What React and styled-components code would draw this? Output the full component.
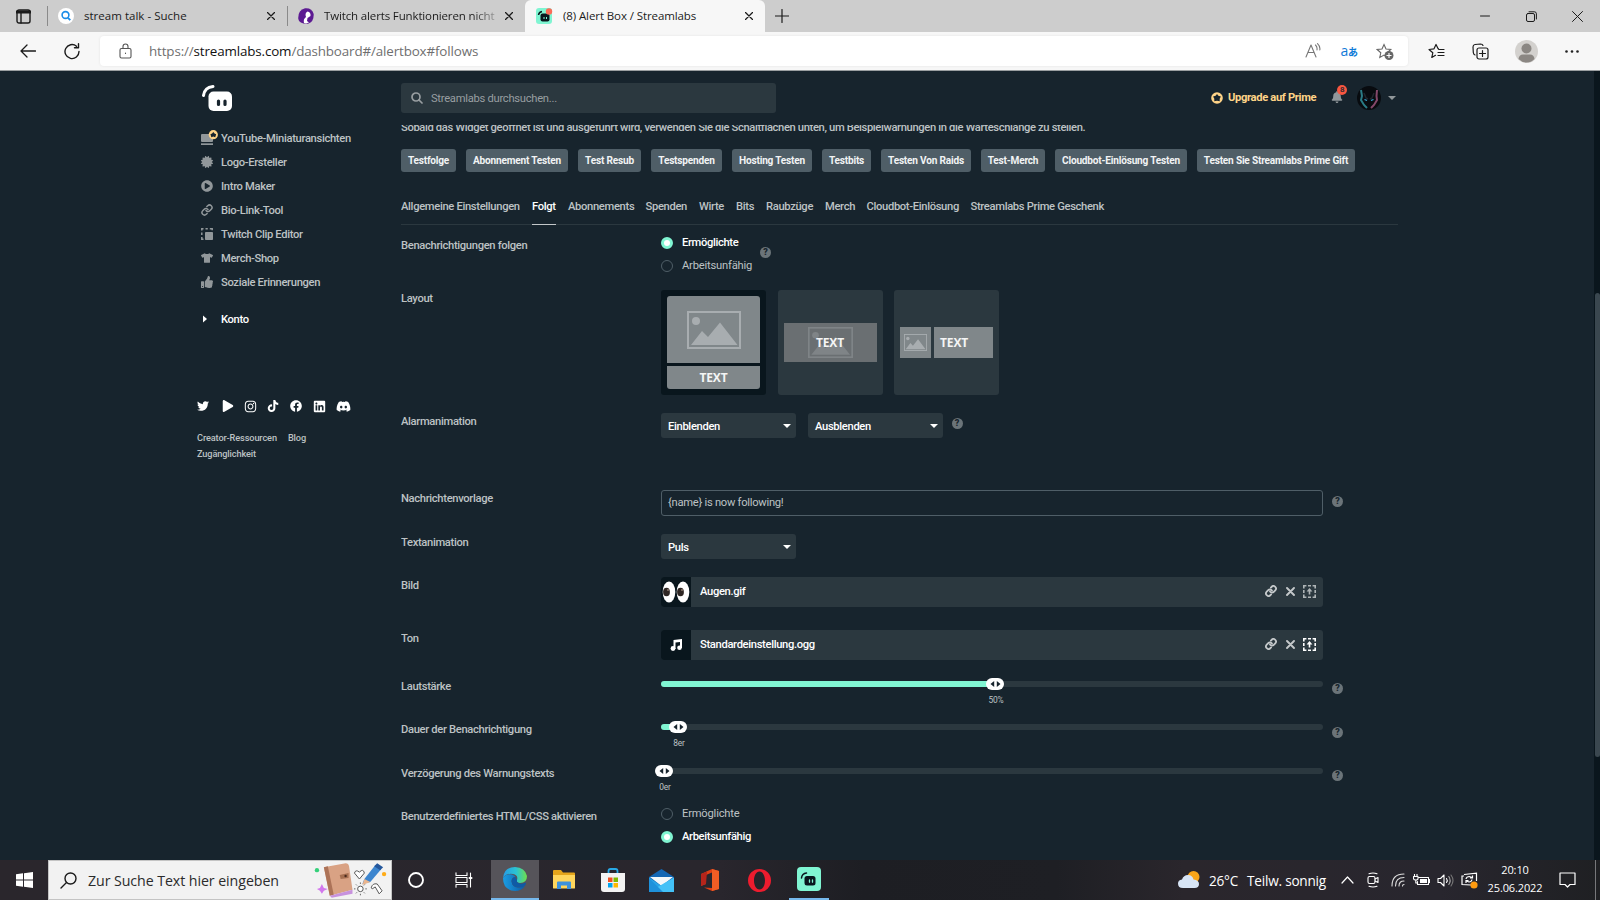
import React from 'react';
import styled, {createGlobalStyle, css} from 'styled-components';
import {
    FaTwitter, FaPlay, FaInstagram, FaTiktok, FaFacebook, FaLinkedin, FaDiscord,
    FaTshirt, FaThumbsUp, FaCertificate, FaPlayCircle, FaBell
} from 'react-icons/fa';
import {Link as LinkIcon} from 'lucide-react';

const colors = {
    bg: '#17242d',
    panel: '#2b383f',
    dark: '#09161d',
    button: '#4f5e67',
    text: '#bdc2c4',
    icon: '#91979a',
    teal: '#80f5d2',
    prime: '#ffd488',
    white: '#ffffff'
};
const roboto = 'Roboto, "Liberation Sans", sans-serif';
const segoe = '"Open Sans", "Noto Sans", "Noto Sans CJK JP", sans-serif';

const GlobalStyle = createGlobalStyle`
    *, *:before, *:after { box-sizing: border-box; }
    body {
        margin: 0;
        overflow: hidden;
        background: ${colors.bg};
    }
    svg { display: block; flex-shrink: 0; }
`;

const Screen = styled.div`
    width: 1600px;
    height: 900px;
    display: flex;
    flex-direction: column;
    overflow: hidden;
`;

/* ---------- browser ---------- */
const TabStrip = styled.div`
    height: 32px;
    display: flex;
    background: #cdcdcd;
    font-family: ${segoe};
    font-size: 11.5px;
    color: #1b1b1b;
`;
const Slot = styled.div`
    width: ${p => p.$w}px;
    height: 100%;
    flex-shrink: 0;
    display: flex;
    align-items: center;
    justify-content: center;
`;
const BrowserTab = styled.div`
    width: ${p => p.$w}px;
    height: 32px;
    display: flex;
    align-items: center;
    padding: 0 12px 0 ${p => p.$left || 10}px;
    ${p => p.$active && css`
        background: #f7f7f7;
        border-radius: 6px 6px 0 0;
    `}
`;
const TabDivider = styled.div`
    width: 1px;
    height: 20px;
    margin-top: 6px;
    background: #8a8a8a;
`;
const TabTitle = styled.div`
    flex: 1;
    margin: 0 9px 0 10px;
    padding-bottom: 2px;
    white-space: nowrap;
    overflow: hidden;
    letter-spacing: ${p => p.$ls || -.1}px;
    ${p => p.$fade && css`
        mask-image: linear-gradient(90deg, #000 86%, rgba(0, 0, 0, .25) 100%);
    `}
`;
const Spacer = styled.div`
    flex: 1;
`;
const Toolbar = styled.div`
    height: 39px;
    display: flex;
    align-items: center;
    background: #f7f7f7;
    border-bottom: 1px solid #9b9fa1;
    padding-left: 5px;
`;
const AddressBar = styled.div`
    width: 1308px;
    height: 30px;
    display: flex;
    align-items: center;
    background: ${colors.white};
    border-radius: 4px;
    box-shadow: 0 0 3px rgba(0, 0, 0, .08);
    font-family: ${segoe};
    font-size: 13.4px;
    letter-spacing: -.14px;
    color: #6f6f6f;
    b {
        font-weight: 400;
        color: #111;
    }
`;
const Translate = styled.div`
    width: 36px;
    padding-bottom: 2px;
    text-align: center;
    color: #0f7bd8;
    font-size: 14px;
    letter-spacing: -.5px;
    small {
        font-size: 10px;
        font-weight: 700;
    }
`;

/* ---------- page ---------- */
const Page = styled.div`
    height: 789px;
    display: flex;
    background: ${colors.bg};
    font-family: ${roboto};
    font-size: 11.2px;
    font-weight: 500;
    letter-spacing: -.33px;
    color: ${colors.text};
    overflow: hidden;
`;
const Sidebar = styled.div`
    width: 401px;
    padding: 14px 0 0 197px;
`;
const Logo = styled.div`
    padding-left: 5px;
    height: 42px;
`;
const MenuItem = styled.div`
    height: 24px;
    display: flex;
    align-items: center;
    padding-left: 4px;
    line-height: 16px;
    margin-top: ${p => p.$gap || 0}px;
    color: ${p => p.$light ? colors.white : colors.text};
`;
const MenuIcon = styled.div`
    width: 20px;
    margin-top: -2px;
    color: ${p => p.$light ? colors.white : colors.icon};
    font-size: 12px;
`;
const Socials = styled.div`
    display: flex;
    align-items: center;
    margin-top: 67px;
    height: 14px;
    color: ${colors.white};
    font-size: 12px;
`;
const Social = styled.div`
    width: ${p => p.$w}px;
`;
const FooterLinks = styled.div`
    display: flex;
    flex-wrap: wrap;
    column-gap: 11px;
    width: 130px;
    margin-top: 17px;
    font-size: 9.2px;
    line-height: 16px;
    letter-spacing: -.12px;
`;
const Main = styled.div`
    width: 997px;
    display: flex;
    flex-direction: column;
`;
const Header = styled.div`
    height: 54px;
    flex-shrink: 0;
    display: flex;
    align-items: center;
    > * { flex-shrink: 0; }
`;
const Search = styled.div`
    width: 375px;
    height: 30px;
    display: flex;
    align-items: center;
    gap: 8px;
    padding-left: 10px;
    margin-right: 435px;
    background: ${colors.panel};
    border-radius: 3px;
    font-weight: 400;
    letter-spacing: -.27px;
    color: #989ea1;
`;
const Upgrade = styled.div`
    display: flex;
    align-items: center;
    gap: 5px;
    width: 120px;
    margin-top: -1px;
    font-weight: 700;
    white-space: nowrap;
    letter-spacing: -.35px;
    color: ${colors.prime};
`;
const Bell = styled.div`
    position: relative;
    width: 26px;
    margin-top: -2px;
    font-size: 12px;
    color: ${colors.icon};
`;
const Badge = styled.div`
    position: absolute;
    left: 6px;
    top: -6px;
    width: 10px;
    height: 10px;
    border-radius: 50%;
    background: #f85640;
    color: #17242d;
    font-size: 8px;
    line-height: 10px;
    text-align: center;
`;
const Scrolled = styled.div`
    flex: 1;
    overflow: hidden;
`;
const Hint = styled.div`
    margin-top: -5px;
    line-height: 16px;
    letter-spacing: ${p => p.$ls}px;
    white-space: nowrap;
`;
const TestButtons = styled.div`
    display: flex;
    gap: 10px;
    margin-top: 13px;
`;
const TestButton = styled.div`
    width: ${p => p.$w}px;
    height: 23px;
    flex-shrink: 0;
    border-radius: 3px;
    background: ${colors.button};
    color: #f1f3f4;
    font-size: 10.1px;
    font-weight: 700;
    line-height: 23px;
    letter-spacing: -.2px;
    text-align: center;
    white-space: nowrap;
`;
const Tabs = styled.div`
    display: flex;
    gap: 12px;
    height: 30px;
    margin-top: 23px;
    border-bottom: 1px solid ${colors.panel};
`;
const Tab = styled.div`
    width: ${p => p.$w}px;
    height: 30px;
    line-height: 23px;
    white-space: nowrap;
    ${p => p.$active && css`
        color: ${colors.white};
        border-bottom: 1px solid #c3c7c9;
    `}
`;
const Form = styled.div`
    padding-top: 12px;
`;
const Row = styled.div`
    display: flex;
    height: ${p => p.$h}px;
`;
const Label = styled.div`
    width: 260px;
    padding-top: 1px;
    line-height: 16px;
`;
const Control = styled.div`
    display: flex;
    align-items: flex-start;
    gap: ${p => p.$gap || 0}px;
`;
const RadioGroup = styled.div`
    display: flex;
    flex-direction: column;
    gap: 11px;
`;
const Radio = styled.div`
    display: flex;
    align-items: center;
    gap: 9px;
    height: 12px;
    line-height: 12px;
    font-weight: ${p => p.$on ? 500 : 400};
    letter-spacing: ${p => p.$on ? -.35 : -.2}px;
    color: ${p => p.$on ? colors.white : colors.text};
    &:before {
        content: '';
        width: 12px;
        height: 12px;
        border-radius: 50%;
        border: ${p => p.$on ? `3px solid ${colors.teal}` : '1px solid #4f5e67'};
        background: ${p => p.$on ? colors.white : 'transparent'};
    }
`;
const HelpDot = styled.div`
    width: 11px;
    height: 11px;
    margin: ${p => p.$top}px 0 0 ${p => p.$left}px;
    border-radius: 50%;
    background: #6b7479;
    color: ${colors.bg};
    font-size: 9px;
    font-weight: 900;
    line-height: 11px;
    letter-spacing: 0;
    text-align: center;
`;
const LayoutCard = styled.div`
    width: 105px;
    height: 105px;
    padding: 6px;
    display: flex;
    flex-direction: ${p => p.$column ? 'column' : 'row'};
    align-items: center;
    gap: 3px;
    border-radius: 3px;
    background: ${p => p.$on ? colors.dark : colors.panel};
`;
const LayoutPart = styled.div`
    width: ${p => p.$w}px;
    height: ${p => p.$h}px;
    display: flex;
    align-items: center;
    justify-content: ${p => p.$start ? 'flex-start' : 'center'};
    padding-left: ${p => p.$start ? 6 : 0}px;
    border-radius: ${p => p.$radius || 0};
    background: ${p => p.$bg || '#80878a'};
    color: #f4f5f5;
    font-family: "Open Sans", sans-serif;
    font-size: 12px;
    font-weight: 700;
    letter-spacing: -.1px;
`;
const Overlay = styled.span`
    position: absolute;
`;
const Select = styled.div`
    width: 135px;
    height: 25px;
    display: flex;
    align-items: center;
    justify-content: space-between;
    padding: 1px 5px 0 7px;
    border-radius: 3px;
    background: ${colors.panel};
    color: ${colors.white};
`;
const Caret = styled.div`
    border: 4px solid transparent;
    border-top-color: ${p => p.$c || colors.white};
    border-bottom: 0;
`;
const Input = styled.div`
    width: 662px;
    height: 26px;
    padding-left: 6px;
    border: 1px solid ${colors.button};
    border-radius: 3px;
    font-weight: 400;
    line-height: 23px;
    letter-spacing: -.27px;
`;
const FileBox = styled.div`
    width: 662px;
    height: 30px;
    display: flex;
    align-items: center;
    background: ${colors.panel};
    border-radius: 3px;
    overflow: hidden;
    color: ${colors.white};
`;
const FileThumb = styled.div`
    width: 30px;
    height: 30px;
    display: flex;
    align-items: center;
    justify-content: center;
    background: ${colors.dark};
`;
const FileName = styled.div`
    flex: 1;
    padding: 0 0 2px 9px;
`;
const FileActions = styled.div`
    display: flex;
    align-items: center;
    gap: 8.5px;
    padding: 0 7px 2px 0;
    color: #c4c8ca;
`;
const Slider = styled.div`
    position: relative;
    width: 662px;
    height: 6px;
    margin-top: 3px;
    border-radius: 3px;
    background: ${colors.panel};
`;
const SliderFill = styled.div`
    height: 6px;
    border-radius: 3px;
    background: ${colors.teal};
`;
const SliderThumb = styled.div`
    position: absolute;
    top: -3px;
    width: 18px;
    height: 12px;
    margin-left: -9px;
    display: flex;
    align-items: center;
    justify-content: center;
    border-radius: 6px;
    background: ${colors.white};
`;
const SliderValue = styled.div`
    position: absolute;
    top: 13px;
    width: 30px;
    margin-left: -14px;
    font-size: 8.4px;
    font-weight: 400;
    line-height: 12px;
    text-align: center;
    letter-spacing: -.1px;
`;
const PageScroll = styled.div`
    width: 6px;
    height: 100%;
    margin-left: auto;
    padding-top: 222px;
    background: #0a161d;
`;
const PageScrollThumb = styled.div`
    height: 464px;
    margin-left: 1px;
    border-radius: 3px;
    background: #3a474f;
`;

/* ---------- taskbar ---------- */
const Taskbar = styled.div`
    height: 40px;
    display: flex;
    background: linear-gradient(90deg, #2a262c 0%, #29262d 45%, #1d1e23 54%, #1e1f24 66%, #2a262c 74%, #28262e 90%, #1f2023 100%);
    font-family: ${segoe};
    color: ${colors.white};
`;
const TaskSearch = styled.div`
    width: 344px;
    display: flex;
    align-items: center;
    padding-left: 11px;
    background: #f2f2f2;
    border: 1px solid #c4c4c4;
    font-size: 14.2px;
    letter-spacing: -.07px;
    color: #2b2b2b;
    span {
        flex: 1;
        margin-left: 11px;
        white-space: nowrap;
    }
`;
const TaskApp = styled.div`
    width: ${p => p.$w}px;
    height: 40px;
    display: flex;
    align-items: center;
    justify-content: center;
    background: ${p => p.$active ? '#56545a' : 'transparent'};
    border-bottom: ${p => p.$open ? '2px solid #76b9ed' : 0};
`;
const Weather = styled.div`
    display: flex;
    align-items: center;
    width: 157px;
    gap: 9px;
    font-size: 13.6px;
    white-space: nowrap;
    letter-spacing: -.22px;
`;
const Clock = styled.div`
    width: 66px;
    font-size: 11px;
    line-height: 18px;
    padding-top: 1px;
    text-align: center;
    letter-spacing: -.13px;
`;
const DesktopEdge = styled.div`
    width: 5px;
    border-left: 1px solid #77777a;
`;

const Stroke = ({w, h, c = '#1b1b1b', sw = 1, children}) => (
    <svg width={w} height={h} viewBox={`0 0 ${w} ${h}`} fill='none' stroke={c} strokeWidth={sw}
         strokeLinecap='round' strokeLinejoin='round'>{children}</svg>
);

const CloseX = ({s = 8, sw = 1.3}) => (
    <Stroke w={s} h={s} sw={sw}><path d={`M.5 .5L${s - .5} ${s - .5}M${s - .5} .5L.5 ${s - .5}`}/></Stroke>
);

const starPath = 'M8 1.5L10 6L14.8 6.5L11.2 9.8L12.2 14.5L8 12.1L3.8 14.5L4.8 9.8L1.2 6.5L6 6Z';

const StreamlabsTile = ({size}) => (
    <svg width={size} height={size} viewBox='0 0 24 24'>
        <rect width='24' height='24' rx='4' fill='#80f5d2'/>
        <path d='M4.5 11Q5 6.5 9.5 6' stroke='#09161d' strokeWidth='1.5' fill='none' strokeLinecap='round'/>
        <rect x='7.5' y='9' width='11' height='9.5' rx='2.5' fill='#09161d'/>
        <path d='M12.5 13v2.2M15.500 13v2.2' stroke='#80f5d2' strokeWidth='1.3' strokeLinecap='round'/>
    </svg>
);

const PrimeRing = ({size}) => (
    <svg width={size} height={size} viewBox='0 0 12 12'>
        <circle cx='6' cy='6' r='5.8' fill={colors.prime}/>
        <path d='M6 2L7.400 3.700L9.900 4.500L8.700 6.700L8.700 9.200L6 8.800L3.300 9.200L3.300 6.700L2.100 4.500L4.600 3.700Z'
              fill={colors.bg}/>
    </svg>
);

const PictureIcon = ({w, h, c = '#a8adb0'}) => (
    <svg width={w} height={h} viewBox='0 0 54 38' preserveAspectRatio='none'>
        <rect x='1' y='1' width='52' height='36' fill='none' stroke={c} strokeWidth='2'/>
        <circle cx='9' cy='10' r='4' fill={c}/>
        <path d='M4 34L15 20L21 26L33 11.5L50.5 34Z' fill={c}/>
    </svg>
);

const UploadIcon = ({c}) => (
    <svg width='13' height='13' viewBox='0 0 13 13' fill='none' stroke={c} strokeWidth='1.6'>
        <path d='M.8 3.4V.8H3.4M5 .8H8M9.6 .8H12.2V3.4M12.2 5V8M12.2 9.6V12.2H9.6M8 12.2H5M3.4 12.2H.8V9.6M.8 8V5'/>
        <path d='M6.5 9.5V4.5'/>
        <path d='M3.6 6.4L6.5 3L9.4 6.4Z' fill={c} stroke='none'/>
    </svg>
);

const Help = props => <HelpDot {...props}>?</HelpDot>;

const tests = [
    ['Testfolge', 55], ['Abonnement Testen', 102], ['Test Resub', 63], ['Testspenden', 71],
    ['Hosting Testen', 80], ['Testbits', 49], ['Testen Von Raids', 90], ['Test-Merch', 64],
    ['Cloudbot-Einlösung Testen', 132], ['Testen Sie Streamlabs Prime Gift', 158]
];

const tabs = [
    ['Allgemeine Einstellungen', 119], ['Folgt', 24], ['Abonnements', 65.5], ['Spenden', 41.5], ['Wirte', 25],
    ['Bits', 18], ['Raubzüge', 47], ['Merch', 29.5], ['Cloudbot-Einlösung', 92], ['Streamlabs Prime Geschenk', 134]
];

const menu = [
    ['YouTube-Miniaturansichten', (
        <svg width='17' height='16' viewBox='0 0 17 16'>
            <rect x='0' y='4' width='12' height='8' rx='1' fill={colors.icon}/>
            <rect x='0' y='13.3' width='12' height='1.7' fill={colors.icon}/>
            <circle cx='12.3' cy='4.7' r='4.600' fill={colors.prime}/>
            <path d='M12.300 2L13.500 3.500L15.200 4.200L14.200 7.200L12.300 6.600L10.400 7.200L9.400 4.200L11.100 3.500Z' fill={colors.bg}/>
        </svg>
    )],
    ['Logo-Ersteller', <FaCertificate/>],
    ['Intro Maker', <FaPlayCircle/>],
    ['Bio-Link-Tool', <LinkIcon size={12} strokeWidth={3}/>],
    ['Twitch Clip Editor', (
        <svg width='12' height='12' viewBox='0 0 12 12'>
            <path d='M.8 2.5V.8H2.5M4.5 .8H6.8M8.8 .8H11.2V2.2M.8 4.6V7M.8 9V11.2H2.5' fill='none'
                  stroke={colors.icon} strokeWidth='1.5'/>
            <rect x='4' y='4' width='8' height='8' rx='.8' fill={colors.icon}/>
        </svg>
    )],
    ['Merch-Shop', <FaTshirt/>],
    ['Soziale Erinnerungen', <FaThumbsUp/>]
];

const socials = [
    [FaTwitter, 25, 12], [FaPlay, 22, 12], [FaInstagram, 22.5, 13], [FaTiktok, 23, 12],
    [FaFacebook, 23.5, 12], [FaLinkedin, 23, 13], [FaDiscord, 15, 15]
];

const Browser = () => (
    <>
        <TabStrip>
            <Slot $w={47}>
                <Stroke w={15} h={15} sw={1.4}>
                    <rect x='1' y='1' width='13' height='13' rx='2'/>
                    <path d='M1 3H14' strokeWidth='3'/>
                    <path d='M5 4V14'/>
                </Stroke>
            </Slot>
            <TabDivider/>
            <BrowserTab $w={239}>
                <svg width='16' height='16' viewBox='0 0 16 16'>
                    <circle cx='8' cy='8' r='8' fill='#fff'/>
                    <circle cx='7.5' cy='7' r='3.4' fill='none' stroke='#1b8de8' strokeWidth='1.6'/>
                    <path d='M10 9.8L12.3 12.2' stroke='#1b8de8' strokeWidth='1.8'/>
                </svg>
                <TabTitle $ls={.02}>stream talk - Suche</TabTitle>
                <CloseX/>
            </BrowserTab>
            <TabDivider/>
            <BrowserTab $w={237}>
                <svg width='16' height='16' viewBox='0 0 16 16'>
                    <path d='M7 .3Q14 -.3 15.7 6Q16 14 10 15.7Q1 16 .3 11Q-.3 2 7 .3Z' fill='#5c1a92'/>
                    <path d='M6 15Q5 11 8 9Q6.500 5 9.500 3.500Q13 4 12.500 8L9.500 10L9 13L11 14.500L8 15.500Z' fill='#fff'/>
                </svg>
                <TabTitle $fade $ls={-.14}>Twitch alerts Funktionieren nicht</TabTitle>
                <CloseX/>
            </BrowserTab>
            <BrowserTab $w={240} $active $left={11}>
                <svg width='17' height='16' viewBox='0 0 17 16'>
                    <rect width='16' height='16' rx='3' fill='#80f5d2'/>
                    <path d='M2.500 7Q3 4 6 3.500' stroke='#09161d' strokeWidth='1.500' fill='none'/>
                    <rect x='4.500' y='5.500' width='9' height='8' rx='2' fill='#09161d'/>
                    <path d='M8 9v2M10.500 9v2' stroke='#80f5d2'/>
                    <circle cx='13' cy='3.500' r='3.200' fill='#fa6b57'/>
                </svg>
                <TabTitle>(8) Alert Box / Streamlabs</TabTitle>
                <CloseX/>
            </BrowserTab>
            <Slot $w={34}><Stroke w={14} h={14} sw={1.2}><path d='M7 .5V13.500M.5 7H13.500'/></Stroke></Slot>
            <Spacer/>
            <Slot $w={46}><Stroke w={10} h={2}><path d='M.5 1H9.500'/></Stroke></Slot>
            <Slot $w={46}>
                <Stroke w={11} h={11}>
                    <rect x='.5' y='2.500' width='8' height='8' rx='1.500'/>
                    <path d='M3 .8H8.500Q10.400 .8 10.400 2.800V8'/>
                </Stroke>
            </Slot>
            <Slot $w={46}><CloseX s={11} sw={1}/></Slot>
        </TabStrip>
        <Toolbar>
            <Slot $w={46}><Stroke w={16} h={14} sw={1.3}><path d='M7 1L1 7L7 13M1 7H15.500'/></Stroke></Slot>
            <Slot $w={42}>
                <Stroke w={16} h={17} sw={1.4}><path d='M15 8.500A7 7 0 1 1 12.500 3.200M14.500 .8V4.800H10.500'/></Stroke>
            </Slot>
            <Slot $w={7}/>
            <AddressBar>
                <Slot $w={2}/>
                <Slot $w={47}>
                    <Stroke w={13} h={16} c='#555' sw={1.1}>
                        <rect x='1' y='5.500' width='11' height='9.500' rx='1.500'/>
                        <path d='M4 5.500V3.500Q4 1 6.500 1T9 3.500V5.500M6.500 10V10.500'/>
                    </Stroke>
                </Slot>
                <span>https://<b>streamlabs.com</b>/dashboard#/alertbox#follows</span>
                <Spacer/>
                <Slot $w={36}>
                    <Stroke w={16} h={16} c='#777' sw={1.1}>
                        <path d='M1 14L6 2L11 14M3 9.500H9M10.500 2Q12.500 4 12 7M12.500 .7Q15.500 3.500 14.800 7'/>
                    </Stroke>
                </Slot>
                <Translate>a<small>あ</small></Translate>
                <Slot $w={36}>
                    <svg width='18' height='17' viewBox='0 0 18 17'>
                        <path d={starPath} fill='none' stroke='#666' strokeWidth='1.100'/>
                        <circle cx='13' cy='12.500' r='4.500' fill='#666'/>
                        <path d='M13 10V15M10.500 12.500H15.500' stroke='#fff' strokeWidth='1.100'/>
                    </svg>
                </Slot>
                <Slot $w={5}/>
            </AddressBar>
            <Slot $w={6}/>
            <Slot $w={44}>
                <Stroke w={17} h={16} sw={1.2}>
                    <path d='M10.500 6L10 5.500L8 1.500L6 5.800L1 6.500L4.800 9.800L3.800 14.500L7.500 12.300M11 6.500H16M10 9.500H16M10 12.500H16'/>
                </Stroke>
            </Slot>
            <Slot $w={44}>
                <Stroke w={17} h={17} sw={1.2}>
                    <rect x='5' y='5' width='11' height='11' rx='2'/>
                    <path d='M10.500 7.500V13.500M7.500 10.500H13.500M3 12Q1.500 11.500 1.300 9.500L1 4Q1 1.800 3 1.500L8.500 1Q10.500 1 11 2.500'/>
                </Stroke>
            </Slot>
            <Slot $w={48}>
                <svg width='23' height='23' viewBox='0 0 23 23'>
                    <circle cx='11.500' cy='11.500' r='11.500' fill='#d3d1ce'/>
                    <circle cx='11.500' cy='8.500' r='5' fill='#8b8783'/>
                    <path d='M3.500 19Q4 14.500 8 14.500H15Q19 14.500 19.500 19Q16 22.500 11.500 22.500T3.500 19Z' fill='#8b8783'/>
                </svg>
            </Slot>
            <Slot $w={44}>
                <svg width='14' height='3' viewBox='0 0 14 3' fill='#222'>
                    <circle cx='1.500' cy='1.500' r='1.300'/><circle cx='7' cy='1.500' r='1.300'/><circle cx='12.500' cy='1.500' r='1.300'/>
                </svg>
            </Slot>
        </Toolbar>
    </>
);

const SideMenu = () => (
    <Sidebar>
        <Logo>
            <svg width='31' height='27' viewBox='0 0 31 27'>
                <path d='M1.500 10.500Q2.500 2.500 11 1.500' stroke='#fff' strokeWidth='3' fill='none' strokeLinecap='round'/>
                <rect x='6.500' y='6.500' width='23.500' height='19.500' rx='5' fill='#fff'/>
                <path d='M16.500 16V19.500M23 16V19.500' stroke={colors.bg} strokeWidth='3.200' strokeLinecap='round'/>
            </svg>
        </Logo>
        {menu.map(([title, icon]) => (
            <MenuItem key={title}><MenuIcon>{icon}</MenuIcon>{title}</MenuItem>
        ))}
        <MenuItem $gap={13} $light>
            <MenuIcon $light>
                <svg width='12' height='8' viewBox='0 0 12 8'><path d='M2 .5L6 4L2 7.500Z' fill='#fff'/></svg>
            </MenuIcon>
            Konto
        </MenuItem>
        <Socials>
            {socials.map(([Icon, w, size], i) => <Social key={i} $w={w}><Icon size={size}/></Social>)}
        </Socials>
        <FooterLinks>
            <span>Creator-Ressourcen</span><span>Blog</span><span>Zugänglichkeit</span>
        </FooterLinks>
    </Sidebar>
);

const MainHeader = () => (
    <Header>
        <Search>
            <Stroke w={12} h={12} c='#989ea1' sw={1.7}><circle cx='5' cy='5' r='4'/><path d='M8 8L11 11'/></Stroke>
            Streamlabs durchsuchen...
        </Search>
        <Upgrade><PrimeRing size={12}/>Upgrade auf Prime</Upgrade>
        <Bell><FaBell/><Badge>8</Badge></Bell>
        <svg width='24' height='24' viewBox='0 0 24 24'>
            <circle cx='12' cy='12' r='12' fill='#080b0f'/>
            <path d='M4 4L5 10L4 14L7 19L10 22' fill='none' stroke='#2a7b85' strokeWidth='2'/>
            <path d='M20 4L19.500 10L20 14L17 19L14 22' fill='none' stroke='#84486a' strokeWidth='2'/>
            <path d='M7 7L9 12L11 13M17 7L15 12L13 13' fill='none' stroke='#20262e' strokeWidth='1.500'/>
            <path d='M7.500 13.500L10 14.500M16.500 13.500L14 14.500' stroke='#38a9d8' strokeWidth='1.300'/>
        </svg>
        <Slot $w={22}><Caret $c={colors.icon}/></Slot>
    </Header>
);

const Volume = ({at, value, label, help}) => (
    <Control>
        <Slider>
            <SliderFill style={{width: at}}/>
            <SliderThumb style={{left: at}}>
                <svg width='11' height='6' viewBox='0 0 11 6' fill={colors.bg}>
                    <path d='M4.200 0V6L.5 3ZM6.800 0V6L10.500 3Z'/>
                </svg>
            </SliderThumb>
            <SliderValue style={{left: at}}>{value}</SliderValue>
        </Slider>
        <Help $left={9} $top={help}/>
    </Control>
);

const FileRow = ({name, thumb, light}) => (
    <FileBox>
        <FileThumb>{thumb}</FileThumb>
        <FileName>{name}</FileName>
        <FileActions>
            <LinkIcon size={12} strokeWidth={3.6}/>
            <Stroke w={9} h={9} c='#c4c8ca' sw={1.9}><path d='M1 1L8 8M8 1L1 8'/></Stroke>
            <UploadIcon c={light ? '#fff' : '#aeb4b6'}/>
        </FileActions>
    </FileBox>
);

const eyes = (
    <svg width='28' height='22' viewBox='0 0 28 22'>
        <ellipse cx='7' cy='11' rx='6.300' ry='10.500' fill='#fff'/>
        <ellipse cx='21' cy='11' rx='6.300' ry='10.500' fill='#fff'/>
        <ellipse cx='4.500' cy='11' rx='3.400' ry='4.300' fill='#2f2724'/>
        <ellipse cx='18.500' cy='11' rx='3.400' ry='4.300' fill='#2f2724'/>
        <circle cx='6' cy='9' r='1' fill='#8d7a6e'/><circle cx='20' cy='9' r='1' fill='#8d7a6e'/>
    </svg>
);

const note = (
    <svg width='12' height='12' viewBox='0 0 12 12' fill='#fff'>
        <path d='M3.500 1L12 0V9H10V3L5.500 3.500V10H3.500Z'/>
        <circle cx='3' cy='9.500' r='2.400'/><circle cx='9.500' cy='8.700' r='2.300'/>
    </svg>
);

const Settings = () => (
    <Form>
        <Row $h={53}>
            <Label>Benachrichtigungen folgen</Label>
            <Control>
                <RadioGroup>
                    <Radio $on>Ermöglichte</Radio>
                    <Radio>Arbeitsunfähig</Radio>
                </RadioGroup>
                <Help $left={8} $top={9.5}/>
            </Control>
        </Row>
        <Row $h={123}>
            <Label>Layout</Label>
            <Control $gap={11.5}>
                <LayoutCard $on $column>
                    <LayoutPart $w={93} $h={67} $radius='3px 3px 0 0'><PictureIcon w={54} h={38}/></LayoutPart>
                    <LayoutPart $w={93} $h={23} $radius='0 0 3px 3px'>TEXT</LayoutPart>
                </LayoutCard>
                <LayoutCard>
                    <LayoutPart $w={93} $h={39} $bg='#6a6f72'>
                        <PictureIcon w={45} h={31} c='#7f8487'/><Overlay>TEXT</Overlay>
                    </LayoutPart>
                </LayoutCard>
                <LayoutCard>
                    <LayoutPart $w={31} $h={31}><PictureIcon w={23} h={17}/></LayoutPart>
                    <LayoutPart $w={59} $h={31} $start>TEXT</LayoutPart>
                </LayoutCard>
            </Control>
        </Row>
        <Row $h={77}>
            <Label>Alarmanimation</Label>
            <Control $gap={12}>
                <Select>Einblenden<Caret/></Select>
                <Select>Ausblenden<Caret/></Select>
                <Help $left={-3.5} $top={4.5}/>
            </Control>
        </Row>
        <Row $h={44}>
            <Label>Nachrichtenvorlage</Label>
            <Control><Input>{'{name} is now following!'}</Input><Help $left={9} $top={6}/></Control>
        </Row>
        <Row $h={43}>
            <Label>Textanimation</Label>
            <Control><Select>Puls<Caret/></Select></Control>
        </Row>
        <Row $h={53}>
            <Label>Bild</Label>
            <Control><FileRow name='Augen.gif' thumb={eyes}/></Control>
        </Row>
        <Row $h={48}>
            <Label>Ton</Label>
            <Control><FileRow name='Standardeinstellung.ogg' thumb={note} light/></Control>
        </Row>
        <Row $h={43}>
            <Label>Lautstärke</Label>
            <Volume at={334} value='50%' help={4.5}/>
        </Row>
        <Row $h={44}>
            <Label>Dauer der Benachrichtigung</Label>
            <Volume at={17} value='8er' help={5.5}/>
        </Row>
        <Row $h={43}>
            <Label>Verzögerung des Warnungstexts</Label>
            <Volume at={3} value='0er' help={4.5}/>
        </Row>
        <Row $h={43}>
            <Label>Benutzerdefiniertes HTML/CSS aktivieren</Label>
            <RadioGroup>
                <Radio>Ermöglichte</Radio>
                <Radio $on>Arbeitsunfähig</Radio>
            </RadioGroup>
        </Row>
    </Form>
);

const Tasks = () => (
    <Taskbar>
        <Slot $w={48}>
            <svg width='17' height='16' viewBox='0 0 17 16' fill='#fff'>
                <path d='M0 2.300L7 1.300V7.500H0ZM8 1.200L17 0V7.500H8ZM0 8.500H7V14.700L0 13.700ZM8 8.500H17V16L8 14.800Z'/>
            </svg>
        </Slot>
        <TaskSearch>
            <Stroke w={17} h={17} sw={1.4}><circle cx='10.500' cy='6.500' r='5.500'/><path d='M6.500 10.500L1 16'/></Stroke>
            <span>Zur Suche Text hier eingeben</span>
            <svg width='77' height='38' viewBox='0 0 78 38'>
                <circle cx='3' cy='9' r='2.200' fill='#35d07a'/>
                <path d='M10 6L32 2Q35 2 35.500 5L39 29L16 35Z' fill='#d9a284'/>
                <path d='M10 6L14 5L20 34L16 35Z' fill='#ac7358'/>
                <path d='M16 35L39 29V33L18 37Z' fill='#c792dd'/>
                <path d='M26 14L35 12V17L27 18Z' fill='#a66f51'/><circle cx='32' cy='15' r='1.200' fill='#4a2a1c'/>
                <path d='M8 23L10 27L14 28L10 30L8 33L6 30L3 28L6 27Z' fill='#d278ed'/>
                <path d='M46 18L41 12Q42 8 46 11Q50 7 51 12Z' fill='#fff' stroke='#555'/>
                <path d='M51 18L62 4L68 8L57 21L49 23Z' fill='#3d86cf'/>
                <path d='M61 5L64 2L70 6L67 9Z' fill='#24579c'/><path d='M51 18L57 21L49 24Z' fill='#e9b58e'/>
                <circle cx='71' cy='13' r='2.200' fill='#ffac18'/>
                <circle cx='47' cy='28' r='2.800' fill='#fff' stroke='#555'/>
                <path d='M47 21.500V23M47 33V34.500M40.500 28H42M52 28H53.500M42.500 23.500L43.500 24.500M51.500 23.500L50.500 24.500M42.500 32.500L43.500 31.500M51.500 32.500L50.500 31.500' stroke='#666'/>
                <path d='M58 27Q59 22 64 23L69 30L66 33L62 26L59 28Z' fill='#fff' stroke='#555'/>
            </svg>
        </TaskSearch>
        <TaskApp $w={47}><Stroke w={16} h={16} c='#fff' sw={1.9}><circle cx='8' cy='8' r='7'/></Stroke></TaskApp>
        <TaskApp $w={49}>
            <Stroke w={18} h={16} c='#fff' sw={1.1}>
                <path d='M1 .8V3.500H12V.8M1 15.200V12.500H12V15.200'/><rect x='1' y='5.500' width='11' height='5'/>
                <path d='M15.500 1V15M15.500 4.500V7.500'/><path d='M14.500 6H16.500' strokeWidth='2'/>
            </Stroke>
        </TaskApp>
        <Slot $w={3}/>
        <TaskApp $w={48} $active $open>
            <svg width='24' height='24' viewBox='0 0 24 24'>
                <defs>
                    <linearGradient id='edgeTop' x1='0' x2='1'>
                        <stop offset='0' stopColor='#279ce5'/><stop offset='.55' stopColor='#2bc3d2'/><stop offset='1' stopColor='#6fe04b'/>
                    </linearGradient>
                    <linearGradient id='edgeSide' x1='0' x2='1'>
                        <stop offset='0' stopColor='#1b9de2'/><stop offset='1' stopColor='#0b59a4'/>
                    </linearGradient>
                </defs>
                <path d='M0 11Q1 0 12 0Q22 .5 24 9Q24 16 17 16Q13 15.500 14 13Q15.500 8 10 7Q3 6 0 11Z' fill='url(#edgeTop)'/>
                <path d='M0 11Q3 6 9 7.500Q12 8.500 12.500 10Q9 10 8.500 14Q9 20 15 20.500Q19 21 22.500 18Q19 24 12 24Q0 23 0 11Z' fill='url(#edgeSide)'/>
                <path d='M8.500 14Q9 10 12.500 10L14 13Q13 15.500 17 16.500Q20 17 23 15.500L22.500 18Q19 21 15 20.500Q9 20 8.500 14Z' fill='#0f5aa5'/>
            </svg>
        </TaskApp>
        <TaskApp $w={49}>
            <svg width='22' height='20' viewBox='0 0 22 20'>
                <path d='M0 1Q0 0 1 0H8L10 2.500H21Q22 2.500 22 3.500V18H0Z' fill='#e5a51b'/>
                <path d='M0 5H22V18Q22 18.500 21 18.500H1Q0 18.500 0 18Z' fill='#ffd65c'/>
                <path d='M4 19V12.500Q4 11.500 5 11.500H17Q18 11.500 18 12.500V19H14V15.500H8V19Z' fill='#3d92dd'/>
            </svg>
        </TaskApp>
        <TaskApp $w={49}>
            <svg width='24' height='24' viewBox='0 0 24 24'>
                <path d='M7.500 6V3Q7.500 1 9.500 1H14.500Q16.500 1 16.500 3V6' fill='none' stroke='#29a9e5' strokeWidth='1.800'/>
                <path d='M0 5H24V21Q24 24 21 24H3Q0 24 0 21Z' fill='#f3f3f3'/>
                <path d='M7 9.500H11.500V14H7Z' fill='#f25022'/><path d='M12.500 9.500H17V14H12.500Z' fill='#7fba00'/>
                <path d='M7 15H11.500V19.500H7Z' fill='#00a4ef'/><path d='M12.500 15H17V19.500H12.500Z' fill='#ffb900'/>
            </svg>
        </TaskApp>
        <TaskApp $w={49}>
            <svg width='25' height='23' viewBox='0 0 25 23'>
                <path d='M0 8L12.500 0L25 8V22H0Z' fill='#1266b4'/>
                <path d='M1 8H24L12.500 17Z' fill='#f2f7fa'/>
                <path d='M0 8.500L12.500 17L0 23Z' fill='#28a5e8'/><path d='M25 8.500V23H0Z' fill='#43c1f7'/>
                <path d='M0 9L14 23H0Z' fill='#1e91db'/>
            </svg>
        </TaskApp>
        <TaskApp $w={48}>
            <svg width='18' height='22' viewBox='0 0 18 22'>
                <path d='M0 5L11 0L18 2V20L11 22L3 18.500L11 19V3.500L5 6V15L0 17Z' fill='#dc3f16'/>
                <path d='M11 0L18 2V20L11 22Z' fill='#f25d24'/><path d='M0 5L6 2.500L5 15L0 17Z' fill='#b5251b'/>
            </svg>
        </TaskApp>
        <TaskApp $w={50}>
            <svg width='23' height='23' viewBox='0 0 23 23'>
                <path fillRule='evenodd' fill='#ed1c2e' d='M11.500 0A11.500 11.500 0 1 0 11.500 23A11.500 11.500 0 1 0 11.500 0ZM11.500 2.500C15 2.500 17 7 17 11.500S15 20.500 11.500 20.500S6 16 6 11.500S8 2.500 11.500 2.500Z'/>
            </svg>
        </TaskApp>
        <Slot $w={5}/>
        <TaskApp $w={40} $open><StreamlabsTile size={24}/></TaskApp>
        <Spacer/>
        <Weather>
            <svg width='22' height='18' viewBox='0 0 22 18'>
                <circle cx='15.500' cy='6' r='6' fill='#f9a51a'/>
                <path d='M5 17Q0 17 0 12.500Q0 9 4 8.500Q5.500 4 10 4Q14.500 4 15.500 8.500Q21 9 21 13Q21 17 16.500 17Z' fill='#d8e5f6'/>
            </svg>
            <span>26°C</span><span>Teilw. sonnig</span>
        </Weather>
        <Slot $w={25}><Stroke w={13} h={8} c='#fff' sw={1.2}><path d='M1 7L6.500 1L12 7'/></Stroke></Slot>
        <Slot $w={25}>
            <Stroke w={14} h={16} c='#fff' sw={1.1}>
                <rect x='2' y='4.500' width='7' height='7' rx='1.500'/><path d='M9 7L12 5.500V10.500L9 9M3 1.800Q7 .3 11 1.800M3 14.200Q7 15.700 11 14.200'/>
            </Stroke>
        </Slot>
        <Slot $w={25}>
            <Stroke w={14} h={14} c='#ddd' sw={1.1}>
                <path d='M1 13Q1 1 13 1M4.500 13Q4.500 4.500 13 4.500M8 13Q8 8 13 8M11.500 13Q11.500 11.500 13 11.500'/>
            </Stroke>
        </Slot>
        <Slot $w={23}>
            <Stroke w={17} h={12} c='#fff' sw={1.1}>
                <path d='M6 3.500H15.500V10.500H4.500V7.500M15.500 5.500H16.500V8.500M1.500 0V2M4 0V2M.5 2.500H5V4.500Q5 6 2.800 6T.5 4.500ZM2.800 6V9H4'/>
                <rect x='7' y='5' width='7' height='4' fill='#fff' stroke='none'/>
            </Stroke>
        </Slot>
        <Slot $w={24}>
            <Stroke w={17} h={13} c='#fff' sw={1.1}>
                <path d='M1 4.500H3.500L7 1V12L3.500 8.500H1ZM9.500 4.500Q11 6.500 9.500 8.500'/>
                <path d='M11.800 2.500Q14.500 6.500 11.800 10.500' stroke='#aaa'/><path d='M14 1Q18 6.500 14 12' stroke='#777'/>
            </Stroke>
        </Slot>
        <Slot $w={25}>
            <svg width='17' height='17' viewBox='0 0 17 17' fill='none' stroke='#fff' strokeWidth='1.200'>
                <path d='M3 2.500L15.500 1.200V9M10 13L1 12.500V4H3M5 7Q5.500 4.500 8.500 4.500L11 5.500M11.500 3.500V6H9M11 7.500Q10.500 10 8 10L5.500 9M5 11V8.500H7.500'/>
                <circle cx='13' cy='13' r='3.600' fill='#ff9b0f' stroke='none'/>
            </svg>
        </Slot>
        <Clock>20:10<br/>25.06.2022</Clock>
        <Slot $w={38}><Stroke w={17} h={16} c='#fff' sw={1.2}><path d='M1 1H16V12.500H11L8.500 15L6 12.500H1Z'/></Stroke></Slot>
        <Slot $w={9}/>
        <DesktopEdge/>
    </Taskbar>
);

export default class App extends React.Component {
    render() {
        return (
            <Screen>
                <GlobalStyle/>
                <Browser/>
                <Page>
                    <SideMenu/>
                    <Main>
                        <MainHeader/>
                        <Scrolled>
                            <Hint $ls={-.36}>
                                Sobald das Widget geöffnet ist und ausgeführt wird, verwenden Sie die Schaltflächen unten, um Beispielwarnungen in die Warteschlange zu stellen.
                            </Hint>
                            <TestButtons>
                                {tests.map(([title, w]) => <TestButton key={title} $w={w}>{title}</TestButton>)}
                            </TestButtons>
                            <Tabs>
                                {tabs.map(([title, w], i) => <Tab key={title} $w={w} $active={i === 1}>{title}</Tab>)}
                            </Tabs>
                            <Settings/>
                        </Scrolled>
                    </Main>
                    <PageScroll><PageScrollThumb/></PageScroll>
                </Page>
                <Tasks/>
            </Screen>
        );
    }
}
